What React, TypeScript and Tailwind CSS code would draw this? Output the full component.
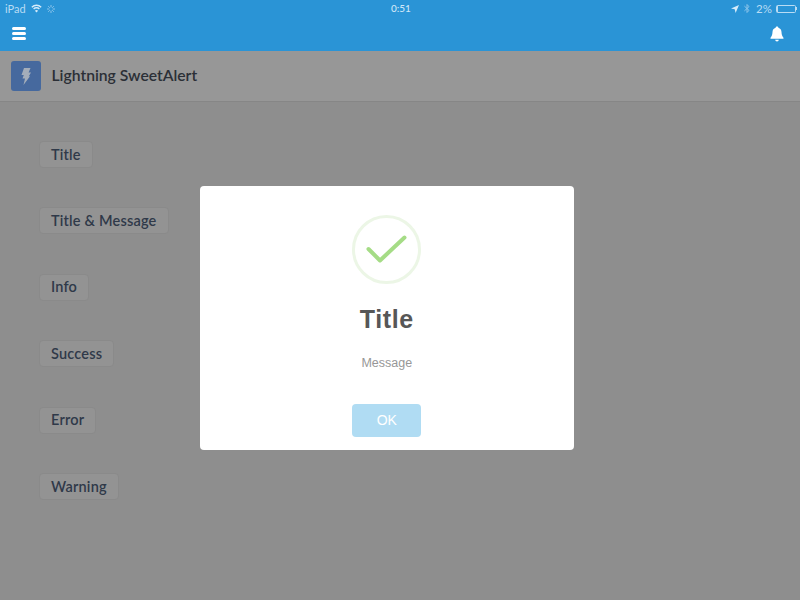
import React from 'react';

const demoButtons = ['Title', 'Title & Message', 'Info', 'Success', 'Error', 'Warning'];

const StatusBar: React.FC = () => (
  <div className="relative flex h-[17px] items-center justify-between pl-[5px] pr-[3px] text-[11px] leading-none text-[#b9dcf4]">
    <div className="flex items-center gap-[5px]">
      <span>iPad</span>
      <svg width="11" height="9" viewBox="0 0 11 9" fill="none" stroke="#d5ebfa" strokeWidth="1.3">
        <path d="M0.8 3.2a6.6 6.6 0 0 1 9.4 0" />
        <path d="M2.6 5a4 4 0 0 1 5.8 0" />
        <path d="M5.5 8.6 3.9 6.8a2.2 2.2 0 0 1 3.2 0z" fill="#d5ebfa" stroke="none" />
      </svg>
      <svg width="8" height="8" viewBox="0 0 8 8" stroke="#8cc4ea" strokeWidth="1">
        <path d="M4 0v2.4M4 5.6V8M0 4h2.4M5.6 4H8M1.2 1.2 2.8 2.8M5.2 5.2l1.6 1.6M6.8 1.2 5.2 2.8M2.8 5.2 1.2 6.8" />
      </svg>
    </div>
    <span className="absolute left-[391px] top-[3px] text-[10px] font-medium text-[#cfe7f8]">0:51</span>
    <div className="flex items-center gap-[5px]">
      <svg width="8" height="8" viewBox="0 0 8 8" fill="#d5ebfa">
        <path d="M8 0 4.6 8 3.7 4.3 0 3.4z" />
      </svg>
      <svg width="6" height="11" viewBox="0 0 6 10" fill="none" stroke="#8cc4ea" strokeWidth="1">
        <path d="M0.4 2.600 5 6.900 3 9V1l2 2.100L0.400 7.400" />
      </svg>
      <span className="ml-[1px] mr-[-1px] text-[11.5px]">2%</span>
      <div className="flex items-center">
        <div className="h-[8px] w-[20px] rounded-[1.500px] border border-[#b9dcf4]">
          <div className="h-full w-[1px] bg-[#b9dcf4]" />
        </div>
        <div className="h-[3px] w-[1px] bg-[#b9dcf4]" />
      </div>
    </div>
  </div>
);

const NavBar: React.FC = () => (
  <div className="flex h-[34px] items-start justify-between pl-[12px] pr-[15px] pt-[9px]">
    <div className="mt-[1px] flex w-[14px] flex-col gap-[2px]">
      <div className="h-[3px] rounded-full bg-white" />
      <div className="h-[3px] rounded-full bg-white" />
      <div className="h-[3px] rounded-full bg-white" />
    </div>
    <svg width="16" height="16" viewBox="0 0 16 16" fill="#fff">
      <path d="M8 0.600c.8 0 1.300.5 1.400 1.200 2 .6 3 2.200 3.100 4.200.1 2.300.5 4 1.800 5.400.5.6.3 1.300-.5 1.300H2.200c-.8 0-1-.7-.5-1.300C3 10 3.400 8.300 3.500 6c.1-2 1.100-3.600 3.100-4.200C6.700 1.100 7.200.6 8 .6z" />
      <path d="M6.200 13.800h3.600a1.800 1.800 0 0 1-3.600 0z" />
    </svg>
  </div>
);

const PageHeader: React.FC = () => (
  <div className="flex h-[51px] items-center gap-[10.500px] border-b border-[#868686] bg-[#979797] pl-[11px]">
    <div className="flex h-[30px] w-[30px] items-center justify-center rounded-[3px] bg-[#46699e]">
      <svg width="10" height="17" viewBox="0 0 10 17" fill="#a3adba">
        <path d="M3 0h6.500L7.600 4.400H10L7.800 8.200H9L2.500 17l1.500-6.500H1.500L2.800 7H0.500z" />
      </svg>
    </div>
    <span className="text-[15.700px] font-semibold text-[#2b2f36]">Lightning SweetAlert</span>
  </div>
);

const SuccessModal: React.FC = () => (
  <div className="absolute left-[200px] top-[186px] flex h-[264px] w-[373.500px] flex-col items-center rounded-[4px] bg-white pt-[29px] font-['Liberation_Sans',sans-serif]">
    <div className="flex h-[69px] w-[69px] items-center justify-center rounded-full border-[3px] border-[#ecf6e6]">
      <svg width="41" height="31" viewBox="0 0 41 31" fill="none" stroke="#a5dc86" strokeWidth="4" strokeLinecap="round" strokeLinejoin="round">
        <path d="M2.500 15 14 26.500 38.500 3.500" />
      </svg>
    </div>
    <div className="mt-[19px] text-[25px] leading-[32px] font-bold tracking-[0.6px] text-[#575757]">Title</div>
    <div className="mt-[20px] text-[12.500px] leading-[16px] text-[#979797]">Message</div>
    <button className="mt-[33px] h-[33px] w-[69px] rounded-[4px] bg-[#b0dcf3] text-[14px] text-white">OK</button>
  </div>
);

const App: React.FC = () => (
  <div className="relative h-[600px] w-[800px] overflow-hidden bg-[#8e8e8e] font-['Lato',sans-serif]">
    <div className="h-[51px] bg-[#2a94d6]">
      <StatusBar />
      <NavBar />
    </div>
    <PageHeader />
    <div className="flex flex-col items-start gap-[39.400px] pl-[39px] pt-[39px]">
      {demoButtons.map((label) => (
        <button
          key={label}
          className="h-[27px] rounded-[4px] border border-[#8a8a8a] bg-[#939393] px-[11px] text-[14.500px] font-semibold tracking-[0.2px] text-[#2f3949]"
        >
          {label}
        </button>
      ))}
    </div>
    <SuccessModal />
  </div>
);

export default App;
